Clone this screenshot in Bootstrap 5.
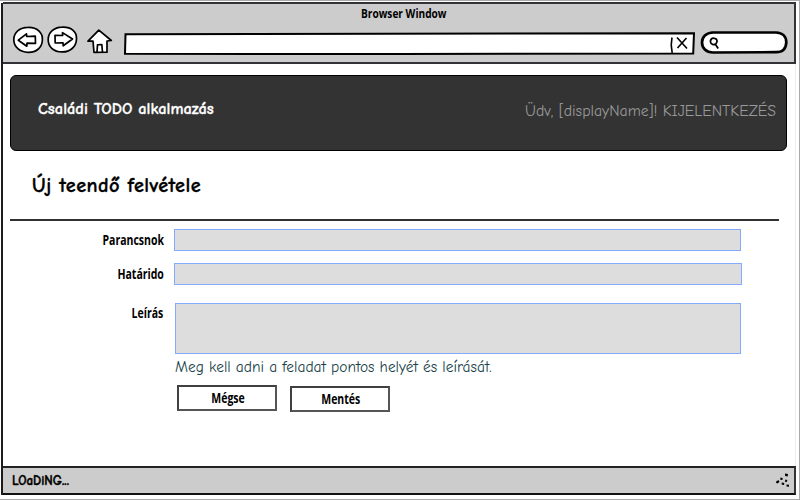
<!DOCTYPE html>
<html lang="hu">
<head>
<meta charset="utf-8">
<meta name="viewport" content="width=device-width, initial-scale=1">
<title>Családi TODO alkalmazás</title>
<link href="https://cdn.jsdelivr.net/npm/bootstrap@5.3.0/dist/css/bootstrap.min.css" rel="stylesheet">
<style>
body{width:800px;height:500px;overflow:hidden;background:#fff;color:#000;font-family:"Comic Sans MS","Comic Neue",Lato,sans-serif;line-height:20px}
.page-frame{width:800px;height:500px;padding:2px 0 0 1px;border-top:1px solid #aaa;border-right:1px solid #aaa;border-bottom:1px solid #aaa}
.window{width:795px;height:492px;border-left:2px solid #1c1c1e}
.chrome{height:62px;background:#ccc;border-top:2px solid #333236;border-bottom:2px solid #333236;border-right:2px solid #333236;margin-top:-1px}
.chrome svg,.status svg{display:block;flex:none}
.fit{display:inline-block;white-space:nowrap}
.narrow{font-family:"Open Sans","Noto Sans",sans-serif;font-weight:700;font-size:14px}
.chrome-title{height:21px;line-height:19px;padding-left:10px}
.chrome-title .fit{font-size:12.5px;transform:scaleX(.81)}
.tools{height:36px;padding-left:9px}
.content{height:403px;border-right:1px solid #eee;padding:11px 8px 0 7px}
.appbar{height:76px;background:#333;border:1px solid #000;border-radius:6px;padding:0 10px 4px 27px}
.brand-text{color:#fff;font-weight:700;font-size:16.4px;line-height:20px;padding-bottom:3px;-webkit-text-stroke:.3px #fff}
.user-text{color:#999;font-size:15.75px}
.page-title{height:70px;padding:0 0 0 22px;border-bottom:2px solid #333032;width:769px}
.page-title h1{font-size:20.3px;font-weight:700;line-height:70px;letter-spacing:.4px;-webkit-text-stroke:.3px #000}
.fields{margin-left:8px}
.label-cell{width:156px;padding:1px 10px 0 0;text-align:right}
.label-cell .fit,.act .fit{transform:scaleX(.75);transform-origin:right}
.act .fit{transform-origin:center;padding-left:2px}
.field{width:567px;height:22px;background:#ddd;border:1px solid #85a9fb;border-radius:0;padding:0 6px;resize:none;display:block}
.row-owner{margin-top:8px}
.row-due{margin-top:12px}
.row-due .field{width:568px}
.row-desc{margin-top:18px}
.row-desc .label-cell{width:157px;padding-right:12px;padding-top:0}
.field.tall{width:566px;height:51px}
.help{color:#173f49;font-size:15.45px;line-height:26px;padding-left:157px}
.acts{margin-top:5px;padding-left:159px;gap:13px}
.act{width:100px;height:26px;border:2px solid #404040;border-right-color:#555;border-bottom-color:#555;border-radius:0;background:#fff;color:#000;padding:0;line-height:22px}
.act:last-child{margin-top:1px}
.status{height:29px;background:#ccc;border-top:2px solid #222;border-bottom:2px solid #111;border-right:2px solid #333;padding:0 4px 0 9px}
.status .fit{font-weight:700;font-size:13px;-webkit-text-stroke:.4px #000}
</style>
</head>
<body>
<div class="page-frame">
<div class="window d-flex flex-column">
  <header class="chrome">
    <div class="chrome-title text-center"><span class="fit narrow">Browser Window</span></div>
    <div class="tools d-flex">
      <svg class="me-2" width="102" height="36" viewBox="12 25 102 36" fill="#fff" stroke="#000" stroke-width="1.7" stroke-linejoin="round" aria-label="Navigation">
        <path d="M28 27.400C37 27 43 33 42.400 40C42 48 36 52.500 28 52.300C20 52.300 13.700 47 13.800 39.500C14 32 20 27.500 28 27.400Z"/>
        <path d="M62 27.200C71 26.500 77 32 76.500 39C76.300 47 70 52 62 51.900C54 52 48 47 48.200 39.500C48.300 32 54 27.500 62 27.200Z"/>
        <path d="M18.300 40.200L26.500 33.800L26.700 36.500L35.300 36.200L35.500 43.300L27 43.200L26.800 46.200Z"/>
        <path d="M55 35.400L62.600 35.500L62.500 32.600L72.500 39L63.200 45.800L63 42.800L55.200 43Z"/>
        <path d="M88 41.200L98.800 30.200L111.300 40.500L107 41L107 52.200L94 52.300L93 41.200ZM97 52L97.500 44.800L101.800 44.500L102.500 52"/>
      </svg>
      <svg width="574" height="36" viewBox="122 25 574 36" fill="none" stroke="#000" stroke-width="2" aria-label="Address">
        <path fill="#fff" d="M125.500 34.200L694 33.200L693.200 53.600L400 54L125 53.800Z"/>
        <path stroke-width="1.600" d="M672 37.500C670.800 43 671 48 672.200 53M677 37.500L687 48.500M686.500 38L677.500 48"/>
      </svg>
      <svg width="94" height="36" viewBox="696 25 94 36" fill="#fff" stroke="#000" aria-label="Search">
        <path stroke-width="2.700" d="M713 32.500H776C783 32.700 786.300 37 786.300 42.500C786 48 783 52.300 776 52.200L713 52.500C706 52.400 702 48 702 42.500C702 37 706 32.600 713 32.500Z"/>
        <path fill="none" stroke-width="1.800" d="M714.500 38.300C711.500 37.700 710.200 40 710.500 42C710.800 44.600 714 45.500 716 43.600C718 41.500 717 38.500 714.500 38.300M715.500 44.500L718.200 48.500"/>
      </svg>
    </div>
  </header>
  <main class="content">
    <nav class="appbar d-flex justify-content-between align-items-center">
      <span class="fit brand-text">Családi TODO alkalmazás</span>
      <span class="fit user-text">Üdv, [displayName]! KIJELENTKEZÉS</span>
    </nav>
    <div class="page-title"><h1 class="m-0">Új teendő felvétele</h1></div>
    <form class="fields">
      <div class="d-flex row-owner"><label class="label-cell" for="owner"><span class="fit narrow">Parancsnok</span></label><input id="owner" class="field"></div>
      <div class="d-flex row-due"><label class="label-cell" for="due"><span class="fit narrow">Határido</span></label><input id="due" class="field"></div>
      <div class="d-flex row-desc"><label class="label-cell" for="desc"><span class="fit narrow">Leírás</span></label><textarea id="desc" class="field tall"></textarea></div>
      <div class="help"><span class="fit">Meg kell adni a feladat pontos helyét és leírását.</span></div>
      <div class="acts d-flex"><button type="button" class="btn act"><span class="fit narrow">Mégse</span></button><button type="button" class="btn act"><span class="fit narrow">Mentés</span></button></div>
    </form>
  </main>
  <footer class="status d-flex justify-content-between align-items-center">
    <span class="fit">LOaDiNG...</span>
    <svg width="15" height="15" viewBox="775 473 15 15"><path d="M785 473.500l3 .5-.3 2.400-2.600-.4zM780.500 477.500l2.200.5-.3 2-2.200-.3zM785.500 479.500l1.800.5-.5 2-2-.3zM776.500 481l2.400-.8.500 1.800-2 1.600-1.400-.8zM781.800 482.500l2.600.5-.5 2-2.300-.5zM786.500 484.500l2.500.3v2l-2.400-.2z"/></svg>
  </footer>
</div>
</div>
<script src="https://cdn.jsdelivr.net/npm/bootstrap@5.3.0/dist/js/bootstrap.bundle.min.js"></script>
</body>
</html>
